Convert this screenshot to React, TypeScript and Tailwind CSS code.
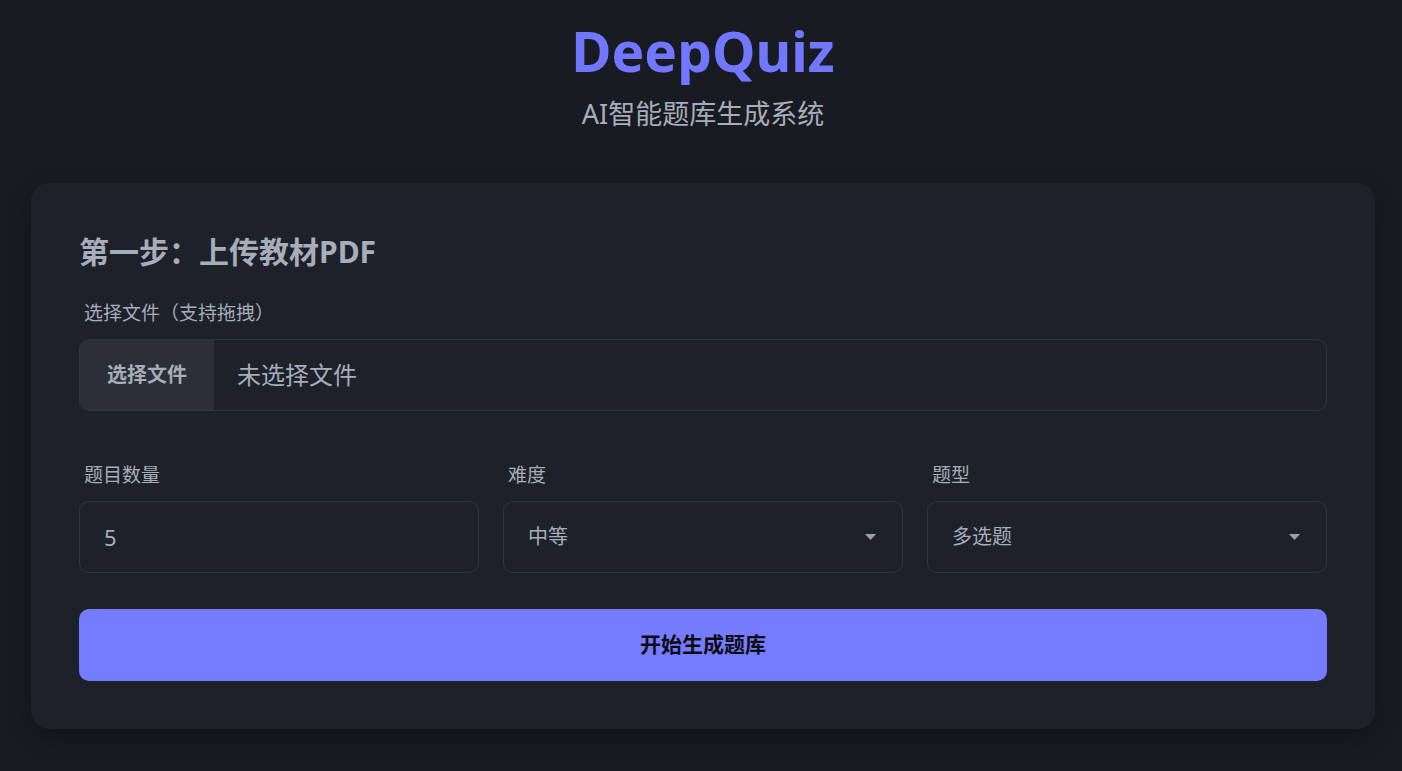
import React from "react";

const font = "font-['Noto_Sans','Noto_Sans_CJK_SC',sans-serif]";

const Caret = () => (
  <svg width="11" height="6" viewBox="0 0 11 6" className="shrink-0">
    <path d="M0 0h11L5.5 6z" fill="#9aa1ad" />
  </svg>
);

const SelectBox: React.FC<{ label: string; value: string }> = ({ label, value }) => (
  <div className="flex flex-col">
    <label className="h-[30px] pl-[5px] text-[19px] leading-[30px] text-[#a7adb9]">{label}</label>
    <div className="mt-[11px] flex h-[72px] items-center justify-between rounded-[10px] border border-[#2f3540] bg-[#1d2129] pl-[24px] pr-[26px]">
      <span className="text-[20px] text-[#a7adb9]">{value}</span>
      <Caret />
    </div>
  </div>
);

export default function App() {
  return (
    <div className={`min-h-screen bg-[#181b21] ${font}`}>
      <div className="ml-[31px] w-[1344px] pt-[17px] pb-[40px]">
        {/* Header */}
        <div className="flex flex-col items-center">
          <h1 className="text-[55px] font-bold leading-[68px] text-[#7178ff]">DeepQuiz</h1>
          <p className="mt-[11px] text-[27px] leading-[36px] text-[#a7adb9]">AI智能题库生成系统</p>
        </div>

        {/* Card */}
        <div className="mt-[51px] rounded-[18px] bg-[#1d2129] p-[48px] shadow-[0_8px_24px_rgba(0,0,0,0.25)]">
          <h3 className="text-[30px] font-bold leading-[42px] text-[#a7adb9]">第一步：上传教材PDF</h3>

          <label className="mt-[25px] block h-[30px] pl-[5px] text-[19px] leading-[30px] text-[#a7adb9]">
            选择文件（支持拖拽）
          </label>
          <div className="mt-[11px] flex h-[72px] overflow-hidden rounded-[10px] border border-[#2f3540]">
            <div className="flex w-[134px] items-center justify-center bg-[#2a2f38] text-[20px] font-bold text-[#a7adb9]">
              选择文件
            </div>
            <div className="flex items-center pl-[23px] text-[24px] text-[#a7adb9]">未选择文件</div>
          </div>

          <div className="mt-[49px] grid grid-cols-3 gap-[24px]">
            <div className="flex flex-col">
              <label className="h-[30px] pl-[5px] text-[19px] leading-[30px] text-[#a7adb9]">题目数量</label>
              <div className="mt-[11px] flex h-[72px] items-center rounded-[10px] border border-[#2f3540] pl-[24px] text-[22px] text-[#a7adb9]">
                5
              </div>
            </div>
            <SelectBox label="难度" value="中等" />
            <SelectBox label="题型" value="多选题" />
          </div>

          <button className="mt-[36px] flex h-[72px] w-full items-center justify-center rounded-[10px] bg-[#757cff] text-[21px] font-bold text-[#0b0d12]">
            开始生成题库
          </button>
        </div>
      </div>
    </div>
  );
}
